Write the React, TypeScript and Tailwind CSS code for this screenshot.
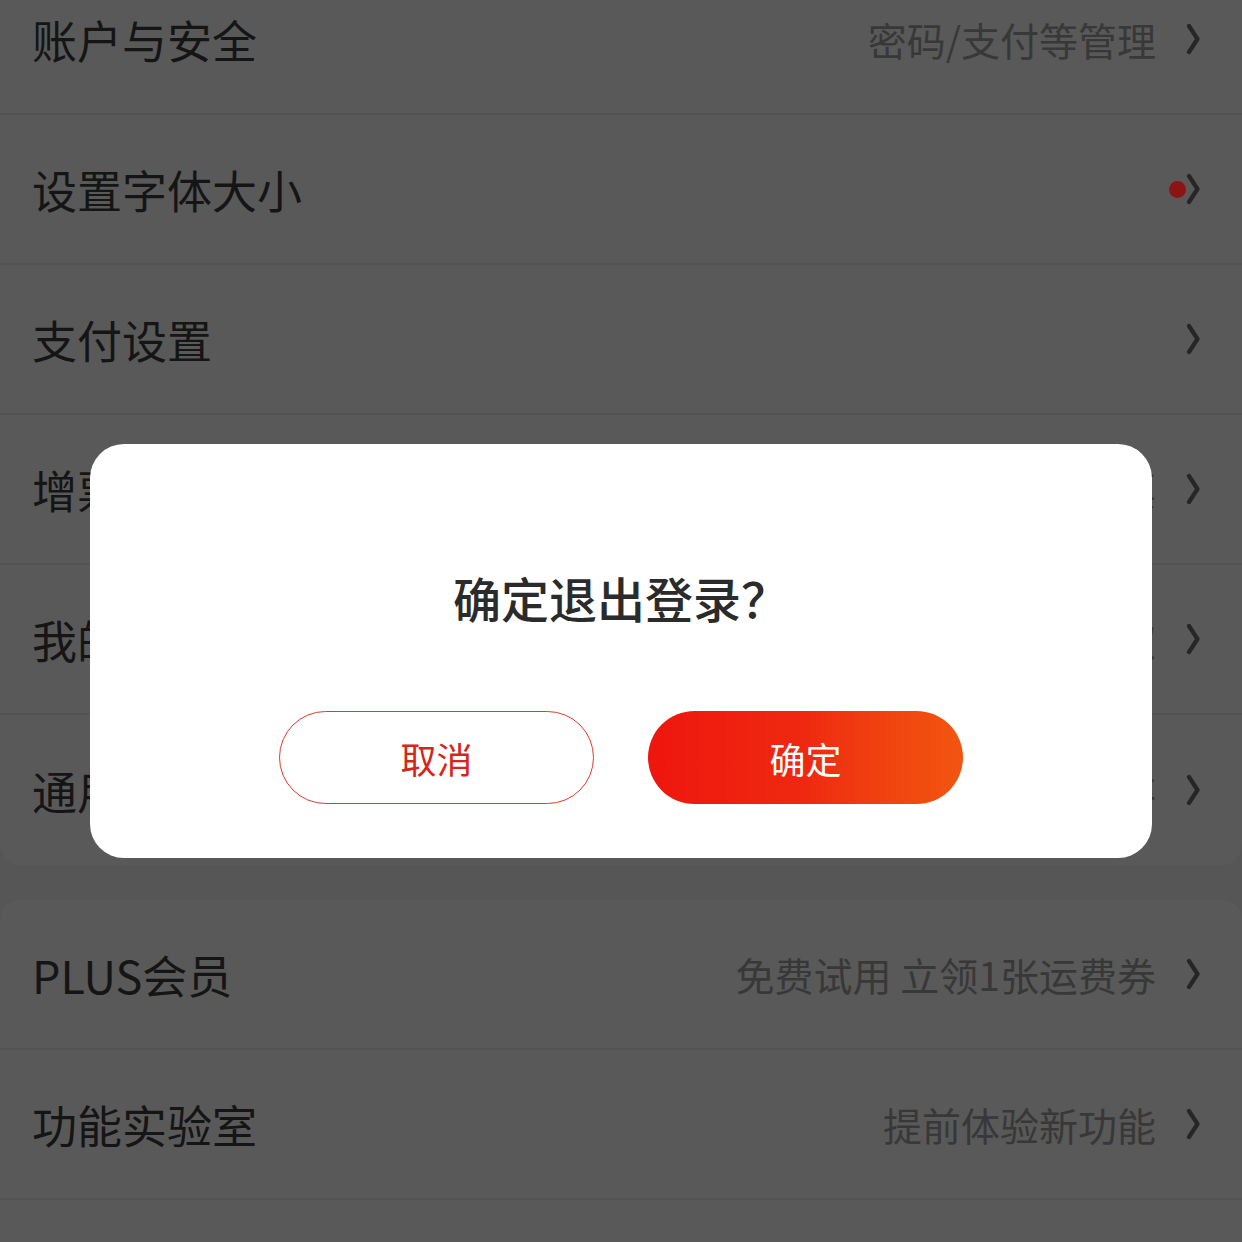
type Row = {
  label: string;
  value?: string;
  dot?: boolean;
};

const groupOne: Row[] = [
  { label: "账户与安全", value: "密码/支付等管理" },
  { label: "设置字体大小", dot: true },
  { label: "支付设置" },
  { label: "增票资质", value: "增值税专用发票" },
  { label: "我的档案", value: "完善信息享特权" },
  { label: "通用", value: "地址/清除缓存" },
];

const groupTwo: Row[] = [
  { label: "PLUS会员", value: "免费试用 立领1张运费券" },
  { label: "功能实验室", value: "提前体验新功能" },
];

const Chevron = () => (
  <svg viewBox="0 0 14 32" fill="none" className="w-[14px] h-[32px] shrink-0">
    <path
      d="M3 3 L11.5 16 L3 29"
      stroke="#262626"
      strokeWidth="4.2"
      strokeLinecap="round"
      strokeLinejoin="round"
    />
  </svg>
);

const SettingRow = ({ row, last }: { row: Row; last: boolean }) => {
  return (
    <div
      className={
        last
          ? "flex items-center h-[150px] pl-[32px] pr-[42px]"
          : "flex items-center h-[150px] pl-[32px] pr-[42px] border-b-2 border-[#535353]"
      }
    >
      <span className="text-[45px] leading-none text-[#151515]">{row.label}</span>
      <div className="ml-auto flex items-center">
        {row.value ? (
          <span className="text-[39px] leading-none text-[#383838] mr-[30px]">{row.value}</span>
        ) : null}
        {row.dot ? <span className="w-[17px] h-[17px] rounded-full bg-[#8c1414]" /> : null}
        <Chevron />
      </div>
    </div>
  );
};

const App = () => {
  return (
    <div className="relative w-[1242px] h-[1242px] overflow-hidden bg-[#565656] font-['Noto_Sans_CJK_SC','Noto_Sans',sans-serif]">
      <div className="-mt-[35px] flex flex-col gap-[35px]">
        <div className="bg-[#595959] rounded-[20px]">
          {groupOne.map((row, i) => (
            <SettingRow key={row.label} row={row} last={i === groupOne.length - 1} />
          ))}
        </div>
        <div className="bg-[#595959] rounded-[20px] pb-[80px]">
          {groupTwo.map((row) => (
            <SettingRow key={row.label} row={row} last={false} />
          ))}
        </div>
      </div>

      {/* logout confirm dialog */}
      <div className="absolute inset-0 flex justify-center items-start pt-[444px]">
        <div className="w-[1062px] h-[414px] bg-white rounded-[34px] flex flex-col items-center pt-[129px]">
          <h1 className="text-[48px] leading-[48px] font-medium text-[#2b2b2b]">确定退出登录？</h1>
          <div className="flex gap-[54px] mt-[90px]">
            <button className="w-[315px] h-[93px] rounded-full border border-[#dc3a2c] text-[#d4261a] text-[36px] leading-none bg-white">
              取消
            </button>
            <button className="w-[315px] h-[93px] rounded-full bg-linear-to-r from-[#ee150e] via-[#ef2810] to-[#f25510] text-white text-[36px] leading-none">
              确定
            </button>
          </div>
        </div>
      </div>
    </div>
  );
};

export default App;
